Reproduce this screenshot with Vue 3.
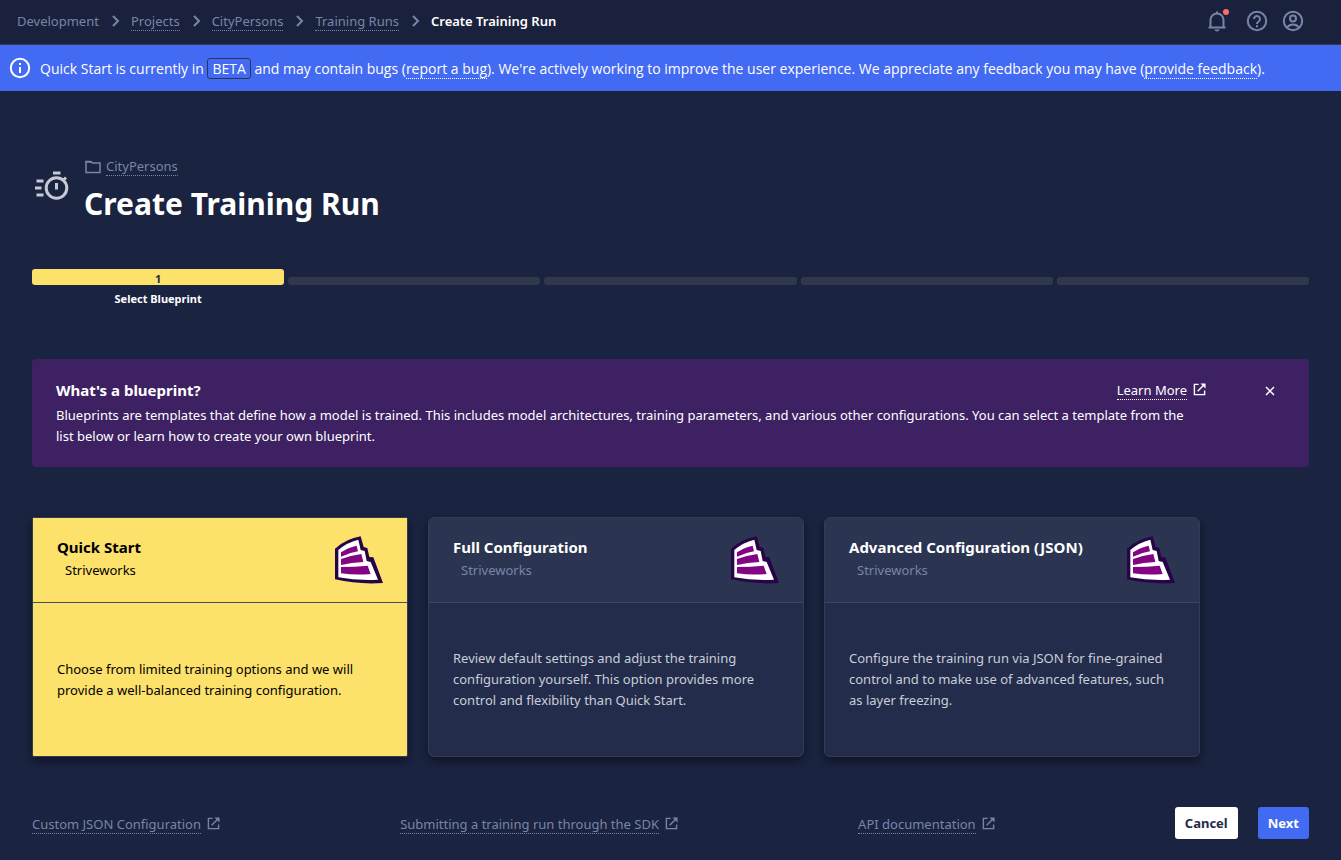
<script setup>
const crumbs = ['Projects', 'CityPersons', 'Training Runs']
const steps = [{ label: 'Select Blueprint', active: true }, {}, {}, {}, {}]
const cards = [
  {
    title: 'Quick Start',
    text: 'Choose from limited training options and we will provide a well-balanced training configuration.',
    selected: true,
  },
  {
    title: 'Full Configuration',
    text: 'Review default settings and adjust the training configuration yourself. This option provides more control and flexibility than Quick Start.',
  },
  {
    title: 'Advanced Configuration (JSON)',
    text: 'Configure the training run via JSON for fine-grained control and to make use of advanced features, such as layer freezing.',
  },
]
const docs = ['Custom JSON Configuration', 'Submitting a training run through the SDK', 'API documentation']
</script>

<template>
  <div class="page">
    <header class="topbar">
      <nav class="crumbs" aria-label="Breadcrumb">
        <span>Development</span>
        <template v-for="c in crumbs" :key="c">
          <svg class="chevron" viewBox="0 0 16 16"><path d="M6 3 11 8l-5 5" /></svg>
          <a class="link" href="#">{{ c }}</a>
        </template>
        <svg class="chevron" viewBox="0 0 16 16"><path d="M6 3 11 8l-5 5" /></svg>
        <strong>Create Training Run</strong>
      </nav>
      <div class="tools">
        <button class="tool bell" type="button" aria-label="Notifications">
          <svg viewBox="0 0 24 24">
            <path d="M3.500 18.500h17M5.500 18.500V11a6.500 6.500 0 0 1 13 0v7.500M12 4.500V2.500" />
            <path class="solid" d="M9.500 20.500h5a2.500 2 0 0 1-5 0z" />
          </svg>
          <span class="dot"></span>
        </button>
        <button class="tool" type="button" aria-label="Help">
          <svg viewBox="0 0 24 24">
            <circle cx="12" cy="12" r="9.200" />
            <path d="M9 10a3 3 0 1 1 4.600 2.500C12.500 13.200 12 13.700 12 15" />
            <path class="solid" d="M11 16.200h2v2h-2z" />
          </svg>
        </button>
        <button class="tool" type="button" aria-label="Account">
          <svg viewBox="0 0 24 24">
            <circle cx="12" cy="12" r="9.200" />
            <circle cx="12" cy="9.500" r="3" />
            <path d="M6 18.500c1.500-2 3.500-3 6-3s4.500 1 6 3" />
          </svg>
        </button>
      </div>
    </header>

    <div class="banner" role="status">
      <svg class="info" viewBox="0 0 24 24">
        <circle cx="12" cy="12" r="9.200" />
        <path d="M12 11v6M12 7v2" />
      </svg>
      <p>
        Quick Start is currently in <span class="beta">BETA</span> and may contain bugs (<a class="link" href="#">report a bug</a>).
        We're actively working to improve the user experience. We appreciate any feedback you may have (<a class="link" href="#">provide feedback</a>).
      </p>
    </div>

    <main class="content">
      <section class="heading">
        <svg class="timer" viewBox="-2 0 36 36">
          <circle cx="22.500" cy="20" r="10.300" />
          <path d="M19 5h7.500M22.500 15v6.500M29.500 12l2.500-2.500M2.500 13h7M1 20h6.500M2.500 27h7" />
        </svg>
        <div>
          <p class="project">
            <svg class="folder" viewBox="0 0 16 16"><path d="M1 2.500h5l1.500 1.500H15v9.500H1z" /><path d="M1 3h5.500" /></svg>
            <a class="link" href="#">CityPersons</a>
          </p>
          <h1>Create Training Run</h1>
        </div>
      </section>

      <ol class="steps">
        <li v-for="(s, i) in steps" :key="i" :class="{ active: s.active }">
          <span class="bar">{{ s.active ? i + 1 : '' }}</span>
          <span class="label">{{ s.label }}</span>
        </li>
      </ol>

      <section class="callout">
        <div class="callout-top">
          <h2>What's a blueprint?</h2>
          <a class="ext" href="#">
            <span class="link">Learn More</span>
            <svg viewBox="0 0 14 14"><path d="M6 1.500H1.500v11h11V8M5 9l6.500-6.500" /><path class="tip" d="M8 .5h5.500V6z" /></svg>
          </a>
          <button class="close" type="button" aria-label="Dismiss">
            <svg viewBox="0 0 10 10"><path d="m1 1 8 8M9 1 1 9" /></svg>
          </button>
        </div>
        <p>
          Blueprints are templates that define how a model is trained. This includes model architectures, training
          parameters, and various other configurations. You can select a template from the list below or learn how to
          create your own blueprint.
        </p>
      </section>

      <section class="cards">
        <button v-for="c in cards" :key="c.title" type="button" class="card" :class="{ selected: c.selected }">
          <span class="card-head">
            <span>
              <span class="card-title">{{ c.title }}</span>
              <span class="card-by">Striveworks</span>
            </span>
            <svg class="logo" viewBox="0 0 144 144">
              <path fill="#270447" d="M0 38Q34 8 77 1l9 32 11 3 6 27 12 1 29 77Q70 146 0 130z" />
              <path fill="#fff" d="M10 42Q36 19 70 11l7 31 12 3 6 30 12 3 22 53Q65 134 10 124z" />
              <path fill="#840584" d="M18 49Q36 36 65 29l4 17Q40 51 18 62zM18 69Q46 58 79 54l6 24Q50 79 18 87zM18 93q40 0 80-4l9 25q-45 4-89-2z" />
            </svg>
          </span>
          <span class="card-body">{{ c.text }}</span>
        </button>
      </section>

      <footer class="bottom">
        <a v-for="d in docs" :key="d" class="ext" href="#">
          <span class="link">{{ d }}</span>
          <svg viewBox="0 0 14 14"><path d="M6 1.500H1.500v11h11V8M5 9l6.500-6.500" /><path class="tip" d="M8 .5h5.500V6z" /></svg>
        </a>
        <div class="actions">
          <button class="btn cancel" type="button">Cancel</button>
          <button class="btn next" type="button">Next</button>
        </div>
      </footer>
    </main>
  </div>
</template>

<style>
body {
  background: #1a2340;
}
</style>

<style scoped>
.page {
  min-height: 100vh;
  box-sizing: border-box;
  background: #1a2340;
  color: #fff;
  font: 13px/21px "Noto Sans", "Open Sans", sans-serif;
}
p, h1, h2, ol {
  margin: 0;
  padding: 0;
}
button {
  font: inherit;
  color: inherit;
  background: none;
  border: 0;
  padding: 0;
  cursor: pointer;
}
svg {
  fill: none;
  stroke: currentColor;
  stroke-width: 2;
  flex: none;
}
a {
  color: inherit;
  text-decoration: none;
}
.link {
  line-height: 18px;
  border-bottom: 1px dotted currentColor;
}
.topbar {
  display: flex;
  align-items: center;
  justify-content: space-between;
  height: 42px;
  padding: 0 36px 2px 17px;
  border-bottom: 1px solid #343c4c;
  background: #1a213c;
  color: #7985a8;
}
.crumbs {
  display: flex;
  align-items: center;
  gap: 8px;
}
.crumbs span,
.crumbs strong {
  line-height: 18px;
  border-bottom: 1px solid transparent;
}
.crumbs strong {
  color: #fff;
  font-weight: 600;
}
.chevron {
  width: 16px;
  height: 16px;
}
.tools {
  display: flex;
  align-items: center;
  gap: 12px;
}
.tool {
  position: relative;
  display: flex;
}
.tool svg {
  width: 24px;
  height: 24px;
}
.bell {
  margin-right: 4px;
}
.solid {
  fill: currentColor;
  stroke: none;
}
.dot {
  position: absolute;
  top: 0;
  right: 0;
  width: 6px;
  height: 6px;
  border-radius: 50%;
  background: #ff6b6b;
}
.banner {
  display: flex;
  align-items: center;
  gap: 8px;
  padding: 11px 8px;
  background: #436af2;
  font-family: "Open Sans", "Noto Sans", sans-serif;
  font-size: 14px;
}
.info {
  width: 24px;
  height: 24px;
}
.beta {
  padding: 0 4px;
  border: 1px solid #2d3550;
  border-radius: 3px;
}
.content {
  padding: 66px 32px 20px;
}
.heading {
  display: flex;
  align-items: center;
  gap: 16px;
}
.timer {
  width: 36px;
  height: 36px;
  margin-bottom: 14px;
  overflow: visible;
  color: #c5cad3;
  stroke-width: 3;
}
.project {
  display: flex;
  align-items: center;
  gap: 5px;
  padding-left: 1px;
  color: #7985a8;
}
.folder {
  width: 16px;
  height: 16px;
  stroke-width: 1.500;
}
h1 {
  margin-top: 4px;
  font-size: 30px;
  line-height: 48px;
  font-weight: 700;
}
.steps {
  display: grid;
  grid-template-columns: repeat(5, minmax(0, 1fr));
  gap: 4px;
  margin-top: 41px;
  list-style: none;
}
.steps li {
  text-align: center;
  font-size: 11px;
  font-weight: 700;
}
.bar {
  display: block;
  height: 8px;
  margin-top: 8px;
  border-radius: 3px;
  background: #32384b;
}
.active .bar {
  height: 16px;
  margin-top: 0;
  line-height: 20px;
  background: #fce16b;
  color: #262b45;
}
.label {
  display: block;
  margin-top: 4px;
  line-height: 20px;
}
.callout {
  margin-top: 50px;
  padding: 19px 24px 20px;
  border-radius: 4px;
  background: #3d2163;
}
.callout-top {
  display: flex;
  align-items: center;
  height: 24px;
}
h2 {
  flex: 1;
  font-size: 15px;
  line-height: 24px;
}
.callout p {
  margin: 3px 96px 0 0;
}
.ext {
  display: flex;
  align-items: center;
  gap: 6px;
}
.ext svg {
  width: 13px;
  height: 13px;
  margin-bottom: 2px;
  stroke-width: 1.500;
}
.ext .tip {
  fill: currentColor;
  stroke: none;
}
.close {
  display: flex;
  margin: 2px 10px 0 59px;
}
.close svg {
  width: 10px;
  height: 10px;
  stroke-width: 1.500;
}
.cards {
  display: grid;
  grid-template-columns: repeat(3, minmax(0, 376px));
  gap: 20px;
  margin-top: 50px;
}
.card {
  display: flex;
  flex-direction: column;
  min-height: 240px;
  border: 1px solid #343c55;
  border-radius: 6px;
  background: #232c4a;
  color: #c9ced8;
  text-align: left;
  box-shadow: 0 4px 10px rgba(0, 0, 0, 0.45);
}
.card-head {
  display: flex;
  align-self: stretch;
  justify-content: space-between;
  box-sizing: border-box;
  height: 85px;
  padding: 18px 24px;
  border-bottom: 1px solid #3d4664;
  border-radius: 5px 5px 0 0;
  background: #2b3450;
}
.card-title {
  display: block;
  margin-bottom: 2px;
  color: #fff;
  font-size: 15px;
  line-height: 22px;
  font-weight: 700;
}
.card-by {
  display: block;
  padding-left: 8px;
  color: #7985a8;
}
.logo {
  width: 48px;
  height: 48px;
  stroke: none;
}
.card-body {
  flex: 1;
  display: flex;
  align-items: center;
  padding: 0 24px;
}
.selected {
  background: #fce16b;
  border-radius: 2px;
}
.selected .card-head {
  border-color: #4b4f5c;
  border-radius: 0;
  background: #fce16b;
}
.selected,
.selected .card-title,
.selected .card-by {
  color: #000;
}
.bottom {
  display: flex;
  align-items: center;
  justify-content: space-between;
  margin-top: 50px;
  color: #7985a8;
}
.bottom .ext {
  padding-top: 2px;
}
.actions {
  display: flex;
  gap: 20px;
}
.btn {
  height: 32px;
  padding: 0 10px;
  border-radius: 3px;
  font-weight: 700;
}
.cancel {
  background: #fff;
  color: #262b45;
}
.next {
  background: #436af2;
  color: #fff;
}
</style>
